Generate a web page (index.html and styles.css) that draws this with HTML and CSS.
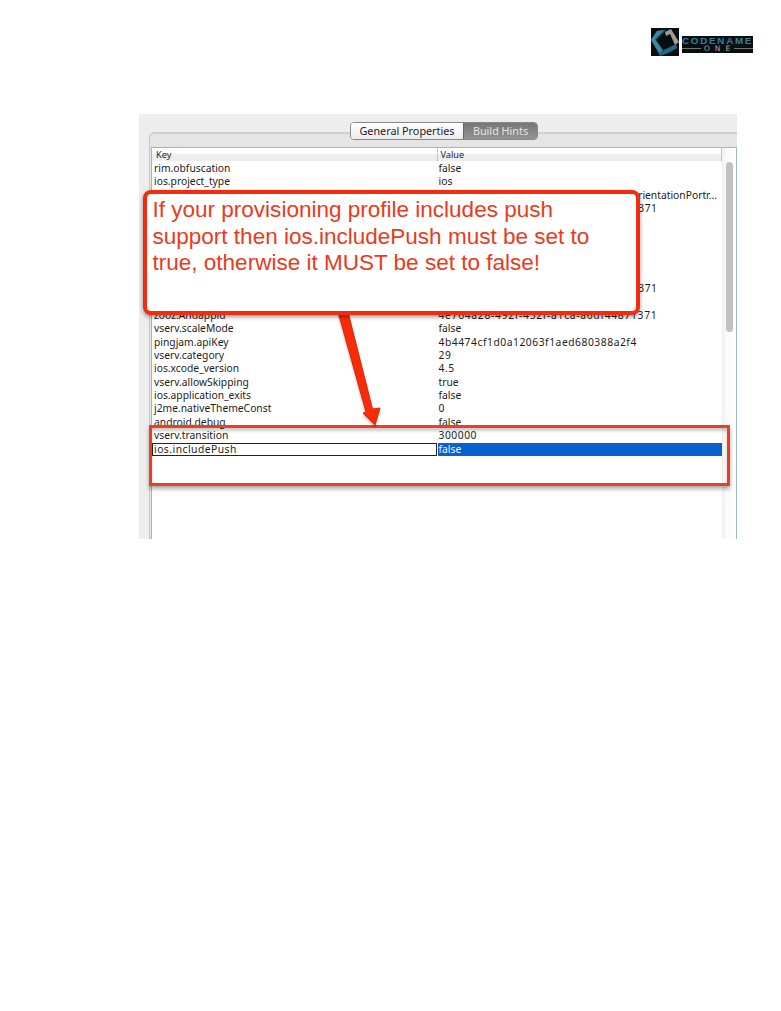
FILE: index.html
```html
<!DOCTYPE html>
<html lang="en">
<head>
<meta charset="utf-8">
<title>Build Hints</title>
<link rel="stylesheet" href="styles.css">
</head>
<body>
<header class="brand">
  <svg class="mark" viewBox="0 0 28 28">
    <rect width="28" height="28" fill="#070d10"/>
    <path d="M6 3L15 2L5 12L13 23L25 17L26 20L18 25L9 28L0 12Z" fill="#1d5d7c"/>
    <path d="M6 3L13 2L4 11L11 22L9 26L0 12Z" fill="#4286a6"/>
    <path d="M13 22L25 16L26 20L11 27Z" fill="#276887"/>
    <path d="M14 4L20 1L28 14L24 17L19 6L15 8Z" fill="#9f9b8e"/>
  </svg>
  <div class="wordmark">
    <div class="word">CODENAME</div>
    <div class="sub"><i></i><span>ONE</span><i></i></div>
  </div>
</header>
<main class="window">
  <div class="panel"></div>
  <nav class="tabs"><span class="tab">General Properties</span><span class="tab active">Build Hints</span></nav>
  <section class="table">
    <div class="grid">
      <div class="head"><span>Key</span><span class="vhead">Value</span></div>
      <div class="rows">
        <div class="row"><span>rim.obfuscation</span><span>false</span></div>
        <div class="row"><span>ios.project_type</span><span>ios</span></div>
        <div class="row"><span></span><span class="end">OrientationPortr...</span></div>
        <div class="row"><span></span><span class="num tail">371</span></div>
        <div class="row"></div>
        <div class="row"></div>
        <div class="row"></div>
        <div class="row"></div>
        <div class="row"></div>
        <div class="row"><span></span><span class="num tail">371</span></div>
        <div class="row"></div>
        <div class="row"><span>zooz.Andappid</span><span class="num id">4e764a28-492f-452f-a1ca-a6df44871371</span></div>
        <div class="row"><span>vserv.scaleMode</span><span>false</span></div>
        <div class="row"><span>pingjam.apiKey</span><span class="num">4b4474cf1d0a12063f1aed680388a2f4</span></div>
        <div class="row"><span>vserv.category</span><span class="num">29</span></div>
        <div class="row"><span>ios.xcode_version</span><span class="num">4.5</span></div>
        <div class="row"><span>vserv.allowSkipping</span><span>true</span></div>
        <div class="row"><span>ios.application_exits</span><span>false</span></div>
        <div class="row"><span>j2me.nativeThemeConst</span><span class="num">0</span></div>
        <div class="row"><span>android.debug</span><span>false</span></div>
        <div class="row"><span>vserv.transition</span><span class="num">300000</span></div>
        <div class="row selected"><span class="editing">ios.includePush</span><span class="chosen">false</span></div>
      </div>
    </div>
    <div class="scroll"><div class="thumb"></div></div>
  </section>
</main>
<div class="highlight"></div>
<svg class="arrow" viewBox="0 0 60 125">
  <path d="M7.500 0L17.500 0L42.500 99L50 98L45 115L33 103L36 102Z" fill="#fb2b08" stroke="#d42a0c" stroke-width="1"/>
</svg>
<div class="callout">
  <div>If your provisioning profile includes push</div>
  <div>support then ios.includePush must be set to</div>
  <div>true, otherwise it MUST be set to false!</div>
</div>
</body>
</html>
```
FILE: styles.css
```css
* { box-sizing: border-box; }
body {
  margin: 0;
  width: 781px;
  height: 1011px;
  overflow: hidden;
  position: relative;
  background: #fff;
  color: #1c1c1c;
  font-family: "Noto Sans", "Open Sans", sans-serif;
}
.brand {
  display: flex;
  gap: 3px;
  height: 114px;
  padding: 28px 0 0 651px;
}
.mark { width: 28px; height: 28px; }
.wordmark {
  width: 71px;
  height: 17px;
  margin-top: 8px;
  background: #080f12;
  overflow: hidden;
}
.word {
  height: 9px;
  font: bold 9.8px/9.5px "Liberation Sans", sans-serif;
  letter-spacing: 1.75px;
  color: #3b7d98;
}
.sub {
  display: flex;
  align-items: center;
  gap: 3px;
  height: 7px;
  font: 7.5px/7px "DejaVu Sans", sans-serif;
  letter-spacing: 5px;
  color: #aaa79a;
}
.sub i { flex: 1; height: 1px; background: #77766d; }
.sub span { margin-right: -4px; }
.window {
  width: 598px;
  height: 425px;
  margin-left: 139px;
  background: #ededed;
  display: grid;
  grid-template: 18px 15px 392px / 10px 2px 586px;
}
.panel {
  grid-area: 2 / 2 / 4 / 4;
  background: #e5e5e5;
  border-top: 2px solid #cfcfcf;
  border-left: 1px solid #c6c6c6;
  border-top-left-radius: 5px;
}
.tabs {
  grid-area: 1 / 1 / 3 / 4;
  display: flex;
  height: 18px;
  width: 188px;
  margin: 8px 0 0 211px;
  border: 1px solid #888;
  border-radius: 4px;
  overflow: hidden;
  z-index: 1;
}
.tab {
  width: 112px;
  text-align: center;
  font-size: 10.8px;
  line-height: 16px;
  white-space: nowrap;
  background: linear-gradient(#fff, #ececec);
}
.tab.active {
  width: 74px;
  color: #e6e6e6;
  background: linear-gradient(#777, #929292);
  border-left: 1px solid #666;
}
.table {
  grid-area: 3 / 3;
  display: flex;
  background: #fff;
  border: solid #9db5cc;
  border-width: 1px 1px 0;
}
.grid { width: 570px; }
.head {
  display: flex;
  height: 13px;
  background: linear-gradient(#fff 40%, #ececec 55%, #eee);
  border-right: 1px solid #c4c4c4;
  font-size: 9.2px;
  line-height: 13px;
}
.head span { width: 285px; padding-left: 4px; }
.head .vhead { border-left: 1px solid #c8c8c8; padding-left: 3px; }
.rows { padding-top: 1px; }
.row {
  display: flex;
  height: 13.37px;
  font-size: 10.3px;
  line-height: 13.37px;
  white-space: nowrap;
}
.row span { width: 285px; padding-left: 2px; }
.row span + span { padding-left: 1.500px; }
.row .num { letter-spacing: .53px; }
.row .id { letter-spacing: .7px; }
.row .tail { text-align: right; padding-right: 64.5px; }
.row .end { text-align: right; padding-right: 5px; }
.row .editing { border: 1px solid #222; padding-left: 1px; line-height: 11px; letter-spacing: .48px; }
.row .chosen { background: #0a60ce; color: #edf5ff; margin-left: 1px; padding-left: .5px; width: 284px; }
.scroll {
  flex: 1;
  padding: 14px 2px 0 4px;
  background: linear-gradient(90deg, #eee, #fafafa 4px, #fff);
}
.thumb { width: 7px; height: 170px; border-radius: 4px; background: #c1c1c1; }
.highlight {
  position: absolute;
  left: 149px;
  top: 425px;
  width: 581px;
  height: 61px;
  border: 3px solid #ea4022;
  box-shadow: 0 3px 4px #0005, inset 0 3px 3px #0003;
}
.arrow {
  position: absolute;
  left: 330px;
  top: 310px;
  width: 60px;
  height: 125px;
  filter: drop-shadow(0 2px 1px #0004);
}
.callout {
  position: absolute;
  left: 143px;
  top: 190px;
  width: 497px;
  height: 125px;
  padding: 3px 5.500px;
  background: #fff;
  border: 4px solid #f42c0d;
  border-radius: 8px;
  box-shadow: 0 2px 4px #0006;
  color: #e93a20;
  font: 22.53px/26.7px "Liberation Sans", Arial, sans-serif;
  white-space: nowrap;
}
```
